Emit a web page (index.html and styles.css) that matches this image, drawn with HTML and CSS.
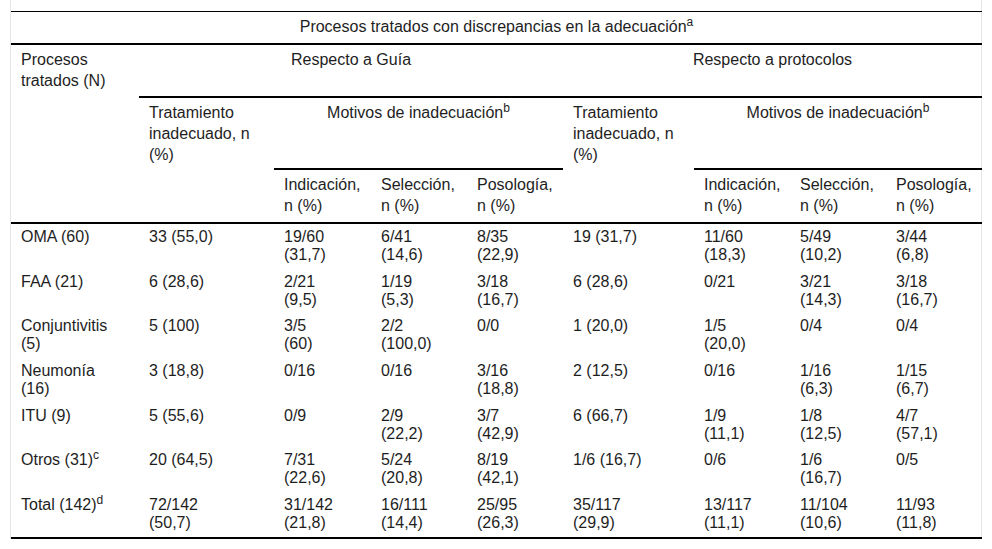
FILE: index.html
```html
<!DOCTYPE html>
<html lang="es">
<head>
<meta charset="utf-8">
<title>Procesos tratados con discrepancias en la adecuación</title>
<link rel="stylesheet" href="styles.css">
</head>
<body>
<div class="wrap">
<table class="t">
<colgroup>
<col class="c-proc"><col class="c-trat"><col class="c-m1"><col class="c-m"><col class="c-m"><col class="c-trat2"><col class="c-m"><col class="c-m"><col class="c-m">
</colgroup>
<thead>
<tr class="h-title"><th colspan="9" class="center rule">Procesos tratados con discrepancias en la adecuación<sup>a</sup></th></tr>
<tr class="h-group"><th rowspan="3" class="rule">Procesos<br>tratados (N)</th><th colspan="4" class="center rule">Respecto a Guía</th><th colspan="4" class="center rule">Respecto a protocolos</th></tr>
<tr class="h-sub"><th rowspan="2" class="rule">Tratamiento<br>inadecuado, n<br>(%)</th><th colspan="3" class="center rule">Motivos de inadecuación<sup>b</sup></th><th rowspan="2" class="rule">Tratamiento<br>inadecuado, n<br>(%)</th><th colspan="3" class="center rule">Motivos de inadecuación<sup>b</sup></th></tr>
<tr class="h-cols"><th class="rule">Indicación,<br>n (%)</th><th class="rule">Selección,<br>n (%)</th><th class="rule">Posología,<br>n (%)</th><th class="rule">Indicación,<br>n (%)</th><th class="rule">Selección,<br>n (%)</th><th class="rule">Posología,<br>n (%)</th></tr>
</thead>
<tbody>
<tr><td>OMA (60)</td><td>33 (55,0)</td><td>19/60<br>(31,7)</td><td>6/41<br>(14,6)</td><td>8/35<br>(22,9)</td><td>19 (31,7)</td><td>11/60<br>(18,3)</td><td>5/49<br>(10,2)</td><td>3/44<br>(6,8)</td></tr>
<tr><td>FAA (21)</td><td>6 (28,6)</td><td>2/21<br>(9,5)</td><td>1/19<br>(5,3)</td><td>3/18<br>(16,7)</td><td>6 (28,6)</td><td>0/21</td><td>3/21<br>(14,3)</td><td>3/18<br>(16,7)</td></tr>
<tr><td>Conjuntivitis<br>(5)</td><td>5 (100)</td><td>3/5<br>(60)</td><td>2/2<br>(100,0)</td><td>0/0</td><td>1 (20,0)</td><td>1/5<br>(20,0)</td><td>0/4</td><td>0/4</td></tr>
<tr><td>Neumonía<br>(16)</td><td>3 (18,8)</td><td>0/16</td><td>0/16</td><td>3/16<br>(18,8)</td><td>2 (12,5)</td><td>0/16</td><td>1/16<br>(6,3)</td><td>1/15<br>(6,7)</td></tr>
<tr><td>ITU (9)</td><td>5 (55,6)</td><td>0/9</td><td>2/9<br>(22,2)</td><td>3/7<br>(42,9)</td><td>6 (66,7)</td><td>1/9<br>(11,1)</td><td>1/8<br>(12,5)</td><td>4/7<br>(57,1)</td></tr>
<tr><td>Otros (31)<sup>c</sup></td><td>20 (64,5)</td><td>7/31<br>(22,6)</td><td>5/24<br>(20,8)</td><td>8/19<br>(42,1)</td><td>1/6 (16,7)</td><td>0/6</td><td>1/6<br>(16,7)</td><td>0/5</td></tr>
<tr><td>Total (142)<sup>d</sup></td><td>72/142<br>(50,7)</td><td>31/142<br>(21,8)</td><td>16/111<br>(14,4)</td><td>25/95<br>(26,3)</td><td>35/117<br>(29,9)</td><td>13/117<br>(11,1)</td><td>11/104<br>(10,6)</td><td>11/93<br>(11,8)</td></tr>
</tbody>
</table>
</div>
</body>
</html>
```

FILE: styles.css
```css
html, body {
  margin: 0;
  background: #fff;
}
body {
  font-family: "Liberation Sans", Arial, Helvetica, sans-serif;
  font-size: 16px;
  color: #1e1e1e;
}
.wrap {
  margin: 0 10px;
  padding-top: 11px;
  border-left: 1px solid #e6e6e6;
  border-right: 1px solid #e6e6e6;
}
.t {
  width: 970px;
  table-layout: fixed;
  border-collapse: separate;
  border-spacing: 0;
  border-top: 1px solid #000;
  border-bottom: 2px solid #000;
}
.c-proc { width: 128px; }
.c-trat { width: 135px; }
.c-m1 { width: 97px; }
.c-m { width: 96px; }
.c-trat2 { width: 131px; }

th, td {
  padding: 4px 10px 0;
  text-align: left;
  vertical-align: top;
  font-weight: normal;
  white-space: nowrap;
}
th { line-height: 21px; }
td { line-height: 18px; }
.center { text-align: center; }
.rule { border-bottom: 2px solid #000; }

.h-title { height: 33px; }
.h-group { height: 53px; }
.h-sub { height: 72px; }
.h-cols { height: 54px; }
tbody tr { height: 44.7px; }

sup {
  font-size: 12px;
  line-height: 0;
  vertical-align: 6px;
}
```
